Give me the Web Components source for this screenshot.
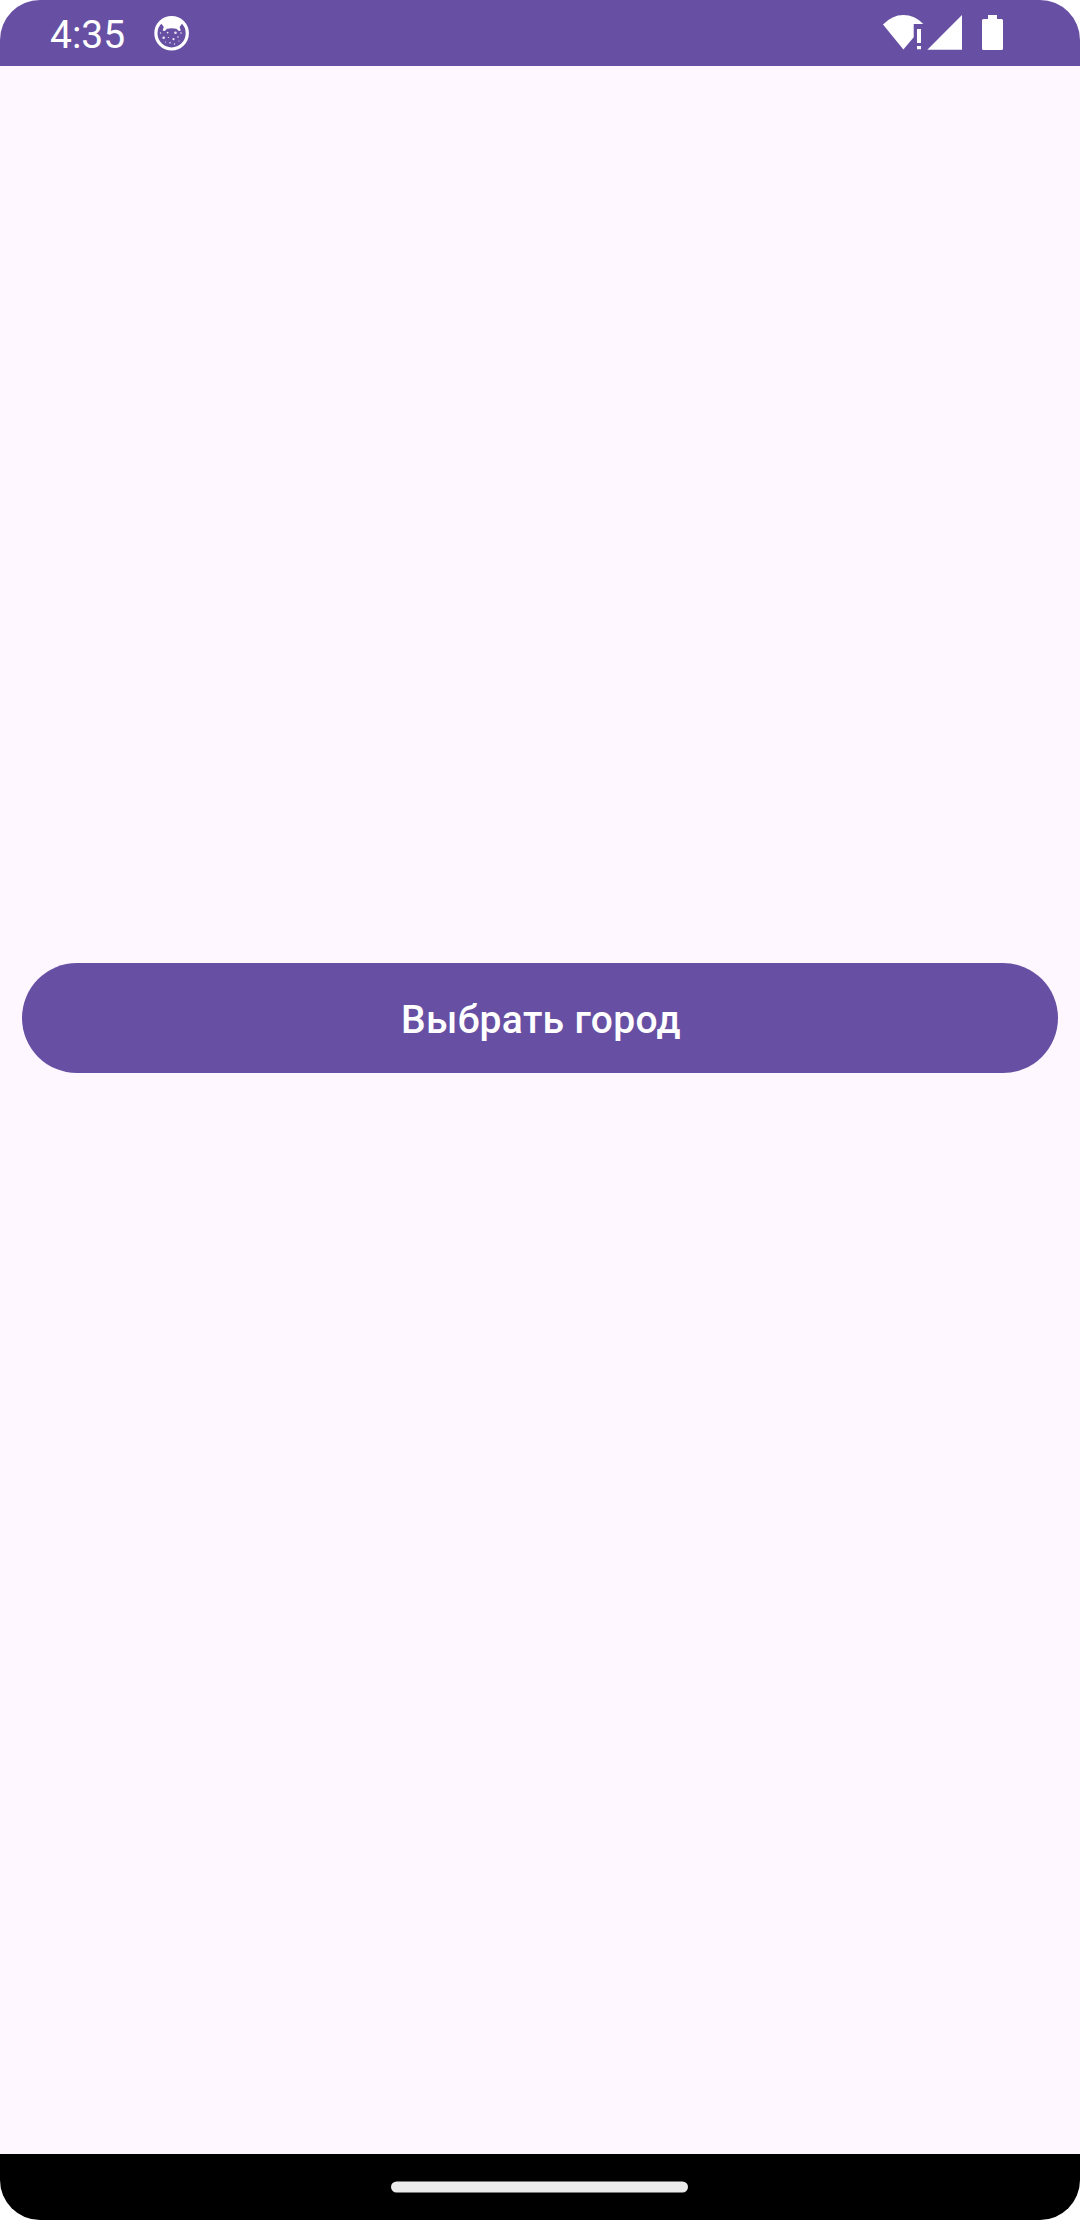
<!DOCTYPE html>
<html lang="ru">
<head>
<meta charset="utf-8">
<title>Выбор города</title>
<style>
html,body{margin:0;padding:0;background:#fff}
</style>
</head>
<body>
<phone-screen>
  <status-bar slot="top" time="4:35"></status-bar>
  <filled-button>Выбрать город</filled-button>
  <gesture-bar slot="bottom"></gesture-bar>
</phone-screen>
<script>
class PhoneScreen extends HTMLElement{
  constructor(){
    super();
    this.attachShadow({mode:'open'}).innerHTML=`
<style>
:host{display:flex;flex-direction:column;width:1080px;height:2220px;overflow:hidden;border-radius:40px;background:#fef7ff;font-family:Roboto,"Noto Sans",sans-serif}
main{flex:1;display:flex;flex-direction:column;padding:897px 22px 0}
</style>
<slot name="top"></slot><main><slot></slot></main><slot name="bottom"></slot>`;
  }
}
class StatusBar extends HTMLElement{
  constructor(){
    super();
    this.attachShadow({mode:'open'}).innerHTML=`
<style>
:host{display:flex;align-items:center;box-sizing:border-box;height:66px;flex:none;padding:0 50px;background:#6750a4;color:#fff}
time{font-size:39px;line-height:46px;width:104px;white-space:nowrap;padding-top:3px}
svg{display:block;height:66px;flex:none}
.right{margin-left:auto}
</style>
<time></time>
<svg width="36" viewBox="154 0 36 66">
  <circle cx="171.6" cy="33.3" r="15.7" fill="none" stroke="#fff" stroke-width="3.2"/>
  <path fill="#fff" d="M158 26Q163 16.8 171.6 16.8T185.2 26L182 23.8L179.6 27L180.8 30.6L178.8 31L176.4 28.8Q171.6 27.6 167 28.8L164.800 31L162.600 30.600L163.800 27L161.400 23.800Z"/>
  <g fill="#fff" opacity=".85">
    <circle cx="167.6" cy="32.6" r=".9"/><circle cx="175.5" cy="32.7" r="1.3"/>
    <circle cx="163.7" cy="37.7" r="1.3"/><circle cx="173.5" cy="39.2" r="1.1"/>
    <circle cx="170" cy="42.8" r=".8"/><circle cx="178" cy="37" r=".8"/>
    <circle cx="160.5" cy="33" r=".7"/><circle cx="181" cy="33" r=".8"/>
    <circle cx="168.5" cy="37.5" r=".6"/><circle cx="174.500" cy="44" r=".7"/>
    <circle cx="165.500" cy="42" r=".6"/><circle cx="179" cy="41" r=".6"/>
  </g>
</svg>
<svg class="right" width="150" viewBox="880 0 150 66" fill="#fff">
  <path d="M883 24.600Q892 15 903.400 15T923.300 24H913.700V37.300L903.400 49.600Z"/>
  <path d="M917 29h4v14h-4zM917 46h4v3.300h-4z"/>
  <path d="M927.300 49.700L962 15V49.700Z"/>
  <path d="M988 15h9v4h4.500q1.500 0 1.500 1.500v28q0 1.500-1.500 1.500h-18q-1.500 0-1.500-1.500v-28q0-1.500 1.500-1.500h4.500z"/>
</svg>`;
  }
  connectedCallback(){this.shadowRoot.querySelector('time').textContent=this.getAttribute('time');}
}
class FilledButton extends HTMLElement{
  constructor(){
    super();
    this.attachShadow({mode:'open'}).innerHTML=`
<style>
:host{display:flex}
button{flex:1;height:110px;border:0;margin:0;padding:4px 0 0 2px;border-radius:55px;background:#6750a4;color:#fff;font:500 39px/46px Roboto,"Noto Sans",sans-serif;letter-spacing:.33px}
</style>
<button type="button"><slot></slot></button>`;
  }
}
class GestureBar extends HTMLElement{
  constructor(){
    super();
    this.attachShadow({mode:'open'}).innerHTML=`
<style>
:host{display:flex;justify-content:center;align-items:center;height:66px;flex:none;background:#000}
svg{display:block}
</style>
<svg width="298" height="66" viewBox="391 2154 298 66"><rect x="391" y="2181.400" width="297" height="11.200" rx="5.600" fill="#ebebeb"/></svg>`;
  }
}
customElements.define('phone-screen',PhoneScreen);
customElements.define('status-bar',StatusBar);
customElements.define('filled-button',FilledButton);
customElements.define('gesture-bar',GestureBar);
</script>
</body>
</html>
